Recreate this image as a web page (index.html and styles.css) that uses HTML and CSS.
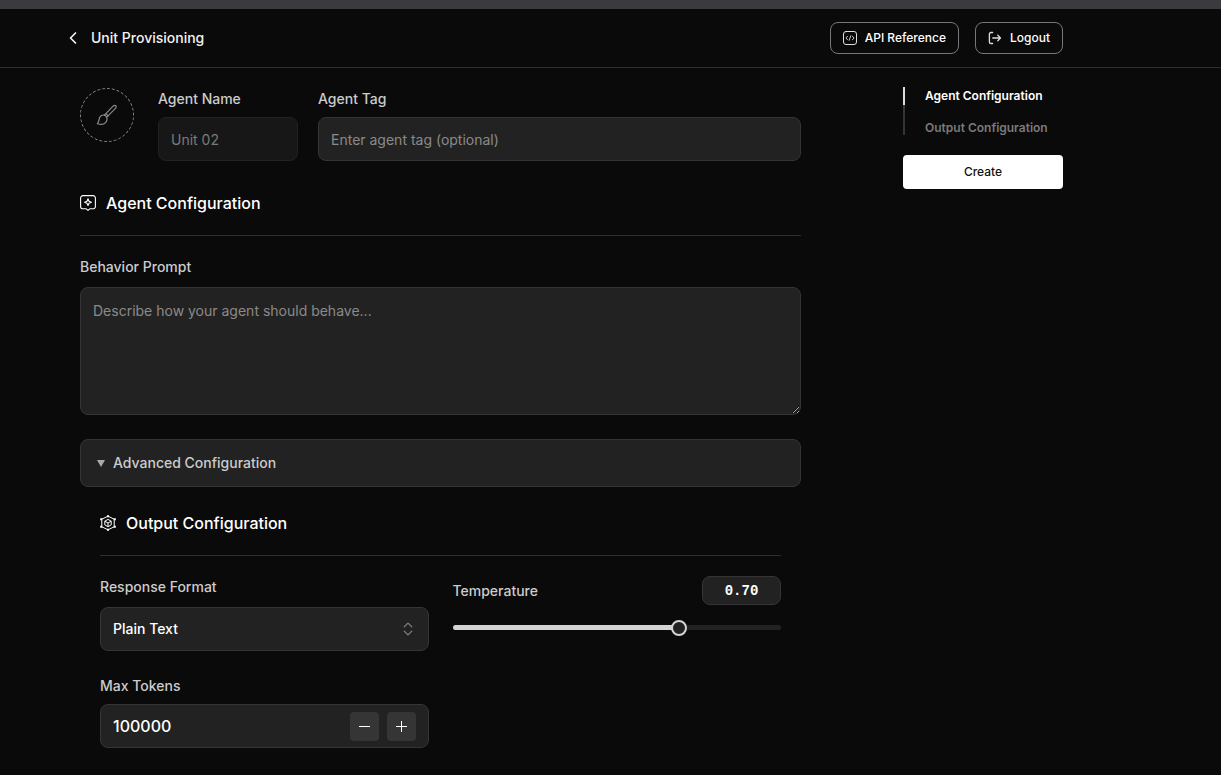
FILE: index.html
```html
<!DOCTYPE html>
<html lang="en">
<head>
  <meta charset="UTF-8">
  <meta name="viewport" content="width=device-width, initial-scale=1.0">
  <title>Unit Provisioning</title>
  <link rel="stylesheet" href="styles.css">
</head>
<body>
  <div class="top-strip"></div>

  <header class="header">
    <a class="back-link" href="#">
      <svg width="10" height="14" viewBox="0 0 10 14" fill="none" stroke="currentColor" stroke-width="1.7" stroke-linecap="round" stroke-linejoin="round"><path d="M7.5 2 2.5 7l5 5"/></svg>
      <span>Unit Provisioning</span>
    </a>
    <nav class="header-actions">
      <button class="outline-btn" type="button">
        <svg width="14" height="14" viewBox="0 0 14 14" fill="none" stroke="currentColor" stroke-linecap="round" stroke-linejoin="round"><rect x=".5" y=".5" width="13" height="13" rx="2.5"/><path stroke-width=".9" d="M4.6 5.2 2.9 7l1.7 1.8M9.4 5.2 11.1 7 9.4 8.8M7.8 4.8 6.2 9.3"/></svg>
        API Reference
      </button>
      <button class="outline-btn" type="button">
        <svg width="14" height="14" viewBox="0 0 14 14" fill="none" stroke="currentColor" stroke-width="1.3" stroke-linecap="round" stroke-linejoin="round"><path d="M4.6 1.5H3A1.6 1.6 0 0 0 1.4 3.1v7.8A1.6 1.6 0 0 0 3 12.5h1.6M4.8 7h7.6M9.8 4.3 12.5 7 9.8 9.7"/></svg>
        Logout
      </button>
    </nav>
  </header>

  <div class="layout">
    <main class="main">
      <section class="identity">
        <button class="avatar" type="button" aria-label="Choose avatar">
          <svg width="22" height="22" viewBox="0 0 22 22" fill="none" stroke="currentColor" stroke-width="1.2" stroke-linecap="round" stroke-linejoin="round"><path d="M8.4 11.1 16.8 2.4c1-1 2.3-1.3 3-.7.7.7.4 2-.6 3l-8.6 8.6"/><path d="M8.4 11.1c1 .3 1.8 1.1 2.2 2.2M9.8 9.8c1 .4 1.8 1.2 2.2 2.1"/><path d="M8.4 11.1c-1.8-.3-3.4.3-4.4 1.7-1.3 1.8-.5 4.4-2.6 6.9 3.1 1 6.4.8 8.2-1.1 1.4-1.5 1.7-3.5 1-5.3"/></svg>
        </button>
        <div class="field field-name">
          <label for="agentName">Agent Name</label>
          <input class="control" id="agentName" type="text" placeholder="Unit 02" disabled>
        </div>
        <div class="field field-tag">
          <label for="agentTag">Agent Tag</label>
          <input class="control" id="agentTag" type="text" placeholder="Enter agent tag (optional)">
        </div>
      </section>

      <section class="section" id="agent">
        <h2 class="section-title">
          <svg width="16" height="16" viewBox="0 0 16 16" fill="none" stroke="currentColor" stroke-width="1.1" stroke-linejoin="round"><path d="M3 .6h10A2.4 2.4 0 0 1 15.4 3v8.4a2.4 2.4 0 0 1-2.4 2.4H9.8L8 15.4l-1.8-1.6H3A2.4 2.4 0 0 1 .6 11.4V3A2.4 2.4 0 0 1 3 .6z"/><path d="M8 3.8 9 6.2l2.4 1L9 8.2l-1 2.4-1-2.4-2.4-1L7 6.2z"/></svg>
          Agent Configuration
        </h2>
        <div class="field field-prompt">
          <label for="prompt">Behavior Prompt</label>
          <textarea class="control" id="prompt" placeholder="Describe how your agent should behave..."></textarea>
        </div>
        <button class="accordion" type="button" aria-expanded="false">
          <span class="triangle"></span>
          Advanced Configuration
        </button>
      </section>

      <section class="section section-output" id="output">
        <h2 class="section-title">
          <svg width="16" height="16" viewBox="0 0 16 16" fill="none" stroke="currentColor" stroke-linejoin="round"><path d="M8 1.2l6.2 3v7.6l-6.2 3-6.2-3V4.2z"/><path d="M8 4.4l3.2 1.8v3.7L8 11.7 4.8 9.9V6.2zM4.8 6.2 8 8l3.2-1.8M8 8v3.7"/><path fill="currentColor" stroke="none" d="M7 .2h2v2H7zM7 13.8h2v2H7zM.2 3.2h2v2h-2zM13.8 3.2h2v2h-2zM.2 10.8h2v2h-2zM13.8 10.8h2v2h-2z"/></svg>
          Output Configuration
        </h2>
        <div class="output-grid">
          <div class="output-column">
            <div class="field field-format">
              <label for="format">Response Format</label>
              <div class="select-wrap">
                <select class="control" id="format">
                  <option>Plain Text</option>
                  <option>JSON</option>
                </select>
                <svg class="select-icon" width="10" height="14" viewBox="0 0 10 14" fill="none" stroke="currentColor" stroke-width="1.1" stroke-linecap="round" stroke-linejoin="round"><path d="M1.2 4.8 5 1.2l3.8 3.6M1.2 9.2 5 12.8l3.8-3.6"/></svg>
              </div>
            </div>
            <div class="field">
              <label for="maxTokens">Max Tokens</label>
              <div class="control stepper">
                <input id="maxTokens" type="text" inputmode="numeric" value="100000">
                <button class="step-btn" type="button" aria-label="Decrease">
                  <svg width="11" height="11" viewBox="0 0 11 11" stroke="currentColor"><path d="M0 5.5h11"/></svg>
                </button>
                <button class="step-btn" type="button" aria-label="Increase">
                  <svg width="11" height="11" viewBox="0 0 11 11" stroke="currentColor"><path d="M0 5.5h11M5.5 0v11"/></svg>
                </button>
              </div>
            </div>
          </div>
          <div class="temperature">
            <div class="temperature-row">
              <label for="temperature">Temperature</label>
              <input class="temperature-value" id="temperatureValue" type="text" value="0.70" aria-label="Temperature value">
            </div>
            <input class="slider" id="temperature" type="range" min="0" max="1" step="0.01" value="0.70">
          </div>
        </div>
      </section>
    </main>

    <aside class="sidebar">
      <nav class="toc">
        <a class="toc-link active" href="#agent">Agent Configuration</a>
        <a class="toc-link" href="#output">Output Configuration</a>
      </nav>
      <button class="create-btn" type="button">Create</button>
    </aside>
  </div>
</body>
</html>
```
FILE: styles.css
```css
* {
  box-sizing: border-box;
}

body {
  margin: 0;
  background: #0a0a0a;
  color: #fff;
  font-family: Inter, sans-serif;
  font-size: 14px;
  line-height: 20px;
}

button,
input,
select,
textarea {
  font: inherit;
  color: inherit;
}

button {
  cursor: pointer;
}

svg {
  display: block;
  flex: none;
}

.top-strip {
  height: 9px;
  background: #3b3a3f;
}

.header {
  display: flex;
  justify-content: space-between;
  align-items: center;
  height: 59px;
  padding: 0 158px 0 68px;
  border-bottom: 1px solid #2e2e2e;
}

.back-link {
  display: flex;
  align-items: center;
  gap: 13px;
  color: #f2f2f2;
  font-weight: 500;
  text-decoration: none;
}

.header-actions {
  display: flex;
  gap: 16px;
}

.outline-btn {
  display: flex;
  align-items: center;
  gap: 8px;
  height: 32px;
  padding: 0 12px;
  background: transparent;
  border: 1px solid #777;
  border-radius: 8px;
  font-size: 12px;
  font-weight: 500;
}

.outline-btn svg {
  color: #ddd;
}

.layout {
  display: flex;
  justify-content: space-between;
  gap: 102px;
  padding: 20px 158px 24px 80px;
}

.main {
  flex: 1;
  min-width: 0;
}

.identity {
  display: flex;
  margin-bottom: 30px;
}

.avatar {
  display: flex;
  justify-content: center;
  align-items: center;
  flex: none;
  width: 54px;
  height: 54px;
  margin-right: 24px;
  padding: 0;
  background: transparent;
  border: 1px dashed #8a8a8a;
  border-radius: 50%;
  color: #8a8a8a;
}

label {
  color: #ccc;
  font-weight: 500;
  line-height: 21px;
}

.field {
  display: flex;
  flex-direction: column;
  gap: 8px;
}

.field-name {
  width: 140px;
  margin-right: 20px;
}

.field-tag {
  flex: 1;
}

.control {
  width: 100%;
  height: 44px;
  padding: 0 12px;
  background: #222;
  border: 1px solid #353535;
  border-radius: 8px;
  outline: none;
}

.control::placeholder {
  color: #8a8a8a;
}

.control:disabled {
  background: #171717;
  border-color: #222;
}

.control:disabled::placeholder {
  color: #7a7a7a;
}

.section-title {
  display: flex;
  align-items: center;
  gap: 10px;
  margin: 0 0 20px;
  padding-bottom: 20px;
  border-bottom: 1px solid #2e2e2e;
  font-size: 16px;
  font-weight: 500;
  line-height: 24px;
}

.field-prompt {
  gap: 10px;
  margin-bottom: 24px;
}

textarea.control {
  display: block;
  height: 128px;
  padding: 13px 12px;
  resize: vertical;
}

.accordion {
  display: flex;
  align-items: center;
  gap: 8px;
  width: 100%;
  height: 48px;
  padding: 0 16px;
  background: #222;
  border: 1px solid #353535;
  border-radius: 8px;
  color: #ccc;
  font-weight: 500;
}

.triangle {
  border: 4px solid transparent;
  border-top: 7px solid #aaa;
  border-bottom: 0;
}

.section-output {
  padding: 24px 20px 0;
}

.output-grid {
  display: grid;
  grid-template-columns: repeat(2, minmax(0, 1fr));
  gap: 24px;
}

.field-format {
  gap: 10px;
  margin-bottom: 24px;
}

.select-wrap {
  position: relative;
}

select.control {
  display: block;
  appearance: none;
  font-weight: 500;
}

.select-icon {
  position: absolute;
  top: 15px;
  right: 16px;
  color: #8a8a8a;
  pointer-events: none;
}

.stepper {
  display: flex;
  align-items: center;
  gap: 8px;
}

.stepper input {
  flex: 1;
  min-width: 0;
  padding: 0;
  background: transparent;
  border: 0;
  outline: none;
  font-size: 16px;
  font-weight: 500;
}

.step-btn {
  display: flex;
  justify-content: center;
  align-items: center;
  width: 29px;
  height: 29px;
  padding: 0;
  background: #353535;
  border: 0;
  border-radius: 4px;
}

.temperature-row {
  display: flex;
  justify-content: space-between;
  align-items: center;
  margin-bottom: 14px;
}

.temperature-value {
  width: 79px;
  height: 29px;
  padding: 0;
  background: #222;
  border: 1px solid #353535;
  border-radius: 8px;
  outline: none;
  font-family: "Liberation Mono", monospace;
  font-weight: 700;
  text-align: center;
}

.slider {
  display: block;
  appearance: none;
  width: 100%;
  height: 16px;
  margin: 0;
  background: transparent;
}

.slider::-webkit-slider-runnable-track {
  height: 5px;
  border-radius: 3px;
  background: linear-gradient(to right, #d4d4d4 69%, #222 69%);
}

.slider::-webkit-slider-thumb {
  appearance: none;
  width: 16px;
  height: 16px;
  margin-top: -5px;
  background: #222;
  border: 2px solid #d4d4d4;
  border-radius: 50%;
}

.sidebar {
  flex: none;
  width: 160px;
}

.toc {
  display: flex;
  flex-direction: column;
  margin: -1px 0 20px;
  font-size: 12px;
  font-weight: 600;
  line-height: 18px;
}

.toc-link {
  padding-left: 20px;
  border-left: 2px solid #353535;
  color: #7a7a7a;
  text-decoration: none;
}

.toc-link:not(.active) {
  padding-top: 16px;
  line-height: 14px;
}

.toc-link.active {
  border-color: #ddd;
  color: #fff;
}

.create-btn {
  width: 100%;
  height: 34px;
  background: #fff;
  border: 0;
  border-radius: 4px;
  color: #111;
  font-size: 12px;
  font-weight: 500;
}
```
